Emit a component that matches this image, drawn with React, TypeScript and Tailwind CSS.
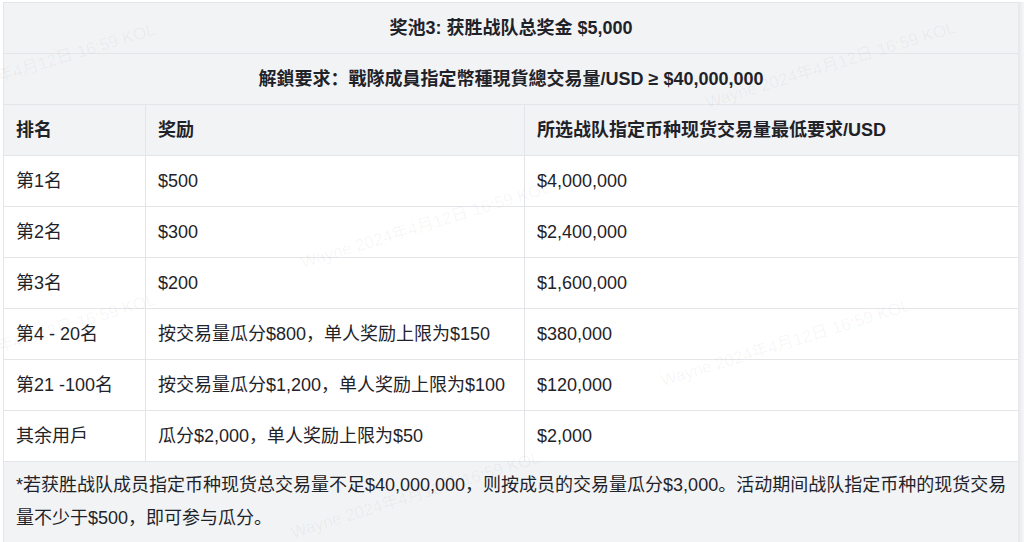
import React from 'react';

type Row = { rank: string; reward: string; min: string };

const rows: Row[] = [
  { rank: '第1名', reward: '$500', min: '$4,000,000' },
  { rank: '第2名', reward: '$300', min: '$2,400,000' },
  { rank: '第3名', reward: '$200', min: '$1,600,000' },
  { rank: '第4 - 20名', reward: '按交易量瓜分$800，单人奖励上限为$150', min: '$380,000' },
  { rank: '第21 -100名', reward: '按交易量瓜分$1,200，单人奖励上限为$100', min: '$120,000' },
  { rank: '其余用戶', reward: '瓜分$2,000，单人奖励上限为$50', min: '$2,000' },
];

// 水印位置（左上起点）
const marks = [
  { left: -90, top: 92 },
  { left: 710, top: 90 },
  { left: 305, top: 250 },
  { left: -90, top: 362 },
  { left: 665, top: 368 },
  { left: 295, top: 520 },
];

const Cell: React.FC<{ children: React.ReactNode; last?: boolean; bold?: boolean }> = ({ children, last, bold }) => (
  <div className={`flex items-center px-3 whitespace-nowrap ${last ? '' : 'border-r border-[#e4e5e8]'} ${bold ? 'font-bold' : ''}`}>
    {children}
  </div>
);

const App: React.FC = () => {
  return (
    <div className="relative w-[1024px] h-[542px] overflow-hidden bg-white font-['Liberation_Sans','Noto_Sans_CJK_SC',sans-serif] text-[18px] text-[#1f2329]">
      <div className="flex pt-[2px] pl-[3px]">
        <div className="w-[1015px] border-t border-l border-[#e4e5e8]">
          <div className="h-[51px] flex items-center justify-center font-bold bg-[#f2f3f5] border-b border-[#e4e5e8]">
            奖池3: 获胜战队总奖金 $5,000
          </div>
          <div className="h-[51px] flex items-center justify-center font-bold bg-[#f2f3f5] border-b border-[#e4e5e8]">
            解鎖要求：戰隊成員指定幣種現貨總交易量/USD ≥ $40,000,000
          </div>
          <div className="h-[51px] grid grid-cols-[142px_379px_1fr] bg-[#f2f3f5] border-b border-[#e4e5e8]">
            <Cell bold>排名</Cell>
            <Cell bold>奖励</Cell>
            <Cell bold last>所选战队指定币种现货交易量最低要求/USD</Cell>
          </div>
          {rows.map((r) => (
            <div key={r.rank} className="h-[51px] grid grid-cols-[142px_379px_1fr] bg-white border-b border-[#e4e5e8]">
              <Cell>{r.rank}</Cell>
              <Cell>{r.reward}</Cell>
              <Cell last>{r.min}</Cell>
            </div>
          ))}
          <div className="bg-[#f2f3f5] px-3 pt-[7px] pb-[15px] leading-[33px]">
            <p className="whitespace-nowrap">
              *若获胜战队成员指定币种现货总交易量不足$40,000,000，则按成员的交易量瓜分$3,000。活动期间战队指定币种的现货交易
            </p>
            <p className="whitespace-nowrap">量不少于$500，即可参与瓜分。</p>
          </div>
        </div>
        <div className="w-[6px] bg-gradient-to-r from-[#e6e7ea] to-[#f7f7f8]" />
      </div>

      {marks.map((m, i) => (
        <div
          key={i}
          className="absolute pointer-events-none whitespace-nowrap origin-bottom-left -rotate-[17deg] text-[17px] text-black/[0.045]"
          style={{ left: m.left, top: m.top }}
        >
          Wayne 2024年4月12日 16:59 KOL
        </div>
      ))}
    </div>
  );
};

export default App;
